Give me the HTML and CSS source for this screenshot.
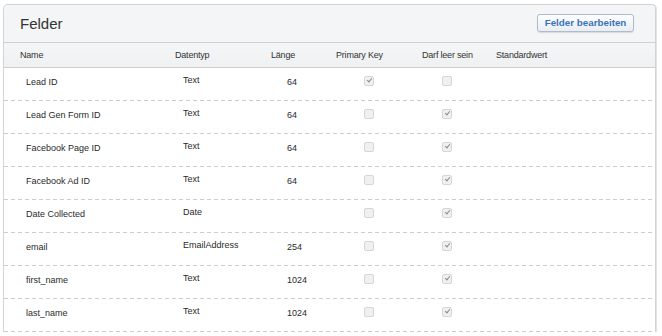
FILE: index.html
```html
<!DOCTYPE html>
<html lang="de">
<head>
  <meta charset="UTF-8" />
  <title>Felder</title>
  <link rel="stylesheet" href="styles.css">
</head>
<body>
  <div class="panel">
    <div class="panel-head">
      <h2 class="panel-title">Felder</h2>
      <button class="btn">Felder bearbeiten</button>
    </div>
    <div class="grid col-head">
      <div>Name</div>
      <div>Datentyp</div>
      <div>Länge</div>
      <div>Primary Key</div>
      <div>Darf leer sein</div>
      <div>Standardwert</div>
    </div>

    <div class="grid row">
      <div class="c-name">Lead ID</div>
      <div class="c-type">Text</div>
      <div class="c-len">64</div>
      <div class="c-pk"><span class="cb checked"></span></div>
      <div class="c-null"><span class="cb"></span></div>
      <div></div>
    </div>
    <div class="grid row">
      <div class="c-name">Lead Gen Form ID</div>
      <div class="c-type">Text</div>
      <div class="c-len">64</div>
      <div class="c-pk"><span class="cb"></span></div>
      <div class="c-null"><span class="cb checked"></span></div>
      <div></div>
    </div>
    <div class="grid row">
      <div class="c-name">Facebook Page ID</div>
      <div class="c-type">Text</div>
      <div class="c-len">64</div>
      <div class="c-pk"><span class="cb"></span></div>
      <div class="c-null"><span class="cb checked"></span></div>
      <div></div>
    </div>
    <div class="grid row">
      <div class="c-name">Facebook Ad ID</div>
      <div class="c-type">Text</div>
      <div class="c-len">64</div>
      <div class="c-pk"><span class="cb"></span></div>
      <div class="c-null"><span class="cb checked"></span></div>
      <div></div>
    </div>
    <div class="grid row">
      <div class="c-name">Date Collected</div>
      <div class="c-type">Date</div>
      <div class="c-len"></div>
      <div class="c-pk"><span class="cb"></span></div>
      <div class="c-null"><span class="cb checked"></span></div>
      <div></div>
    </div>
    <div class="grid row">
      <div class="c-name">email</div>
      <div class="c-type">EmailAddress</div>
      <div class="c-len">254</div>
      <div class="c-pk"><span class="cb"></span></div>
      <div class="c-null"><span class="cb checked"></span></div>
      <div></div>
    </div>
    <div class="grid row">
      <div class="c-name">first_name</div>
      <div class="c-type">Text</div>
      <div class="c-len">1024</div>
      <div class="c-pk"><span class="cb"></span></div>
      <div class="c-null"><span class="cb checked"></span></div>
      <div></div>
    </div>
    <div class="grid row">
      <div class="c-name">last_name</div>
      <div class="c-type">Text</div>
      <div class="c-len">1024</div>
      <div class="c-pk"><span class="cb"></span></div>
      <div class="c-null"><span class="cb checked"></span></div>
      <div></div>
    </div>
  </div>
</body>
</html>
```

FILE: styles.css
```css
body {
  margin: 0;
  padding: 4px 6px 0 3px;
  background: #fff;
  font-family: 'Liberation Sans', Arial, sans-serif;
  color: #333;
  overflow: hidden;
}

.panel {
  border: 1px solid #d3d3d3;
  border-bottom: none;
  border-radius: 5px 5px 0 0;
  box-shadow: 1px 0 1px rgba(0, 0, 0, 0.12);
  background: #fff;
}

.panel-head {
  height: 37px;
  display: flex;
  align-items: center;
  justify-content: space-between;
  padding: 0 21px 0 16px;
  background: #f4f5f6;
  border-bottom: 1px solid #d0d0d0;
  border-radius: 5px 5px 0 0;
}

.panel-title {
  margin: 0 0 1px;
  font-size: 15px;
  font-weight: normal;
  color: #333;
}

.btn {
  height: 18px;
  width: 97px;
  padding: 0;
  margin-bottom: 2px;
  font-family: inherit;
  font-size: 9.8px;
  font-weight: bold;
  color: #3b73b9;
  border: 1px solid #aebccc;
  border-radius: 3px;
  background: linear-gradient(#fdfdfe, #e9eef3);
  box-shadow: 0 1px 1px rgba(0, 0, 0, 0.12);
}

.grid {
  display: grid;
  grid-template-columns: 155px 96px 65px 86px 74px 1fr;
  padding-left: 16px;
  font-size: 9px;
}

.col-head {
  height: 24px;
  align-items: center;
  background: linear-gradient(#f5f6f7, #eff0f2);
  border-bottom: 1px solid #cfcfcf;
  letter-spacing: -0.2px;
}

.row {
  height: 32px;
  align-items: center;
  padding-bottom: 1px;
  color: #2a2a2a;
  background: linear-gradient(to right, #cdcdcd 4px, transparent 4px) repeat-x left bottom / 7px 1px;
}

.row > div {
  padding-bottom: 5px;
}

.c-name { padding-left: 6px; }
.row > .c-type { padding-left: 8px; padding-bottom: 8px; }
.c-len { padding-left: 16px; }
.row > .c-pk { padding-left: 28px; padding-bottom: 7px; }
.row > .c-null { padding-left: 20px; padding-bottom: 7px; }

.cb {
  display: block;
  width: 8px;
  height: 8px;
  border: 1px solid #d6d6d6;
  border-radius: 2px;
  background: #f0f0f0;
  position: relative;
}

.cb.checked::after {
  content: '';
  position: absolute;
  left: 2px;
  top: 1px;
  width: 4px;
  height: 2px;
  border-left: 1.5px solid #8a8a8a;
  border-bottom: 1.5px solid #8a8a8a;
  transform: rotate(-50deg);
}
```
